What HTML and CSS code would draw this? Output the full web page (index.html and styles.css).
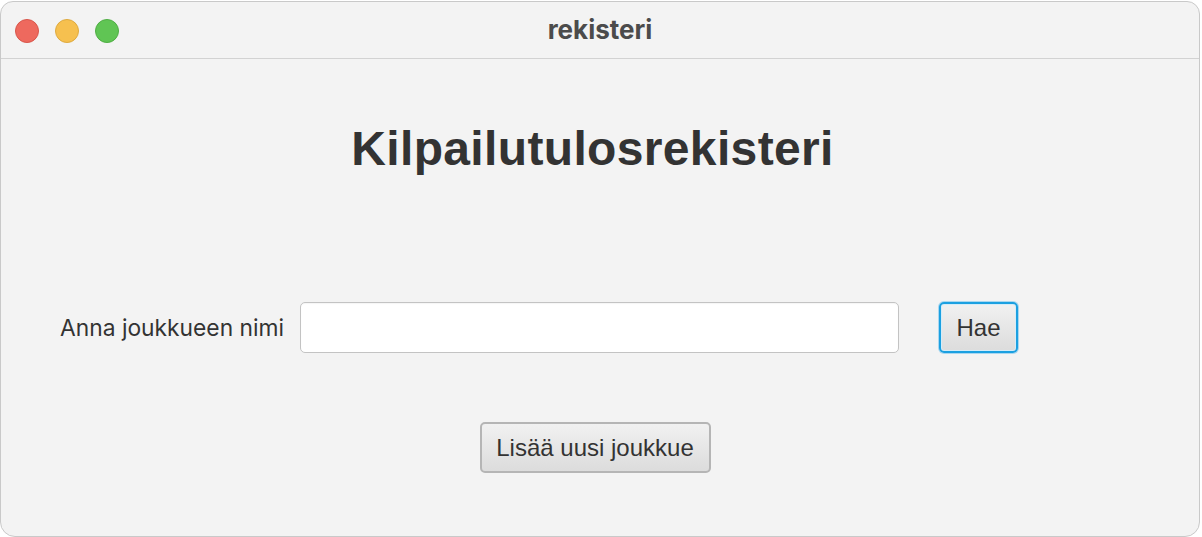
FILE: index.html
```html
<!DOCTYPE html>
<html>
<head>
<meta charset="utf-8">
<link rel="stylesheet" href="styles.css">
</head>
<body>
<div class="window">
  <div class="titlebar">
    <div class="lights">
      <span class="light red"></span>
      <span class="light yellow"></span>
      <span class="light green"></span>
    </div>
    <div class="title">rekisteri</div>
  </div>
  <div class="content">
    <h1 class="heading">Kilpailutulosrekisteri</h1>
    <div class="search-row">
      <label class="label">Anna joukkueen nimi</label>
      <div class="field"></div>
      <button class="btn btn-focus">Hae</button>
    </div>
    <div class="add-row">
      <button class="btn btn-add">Lisää uusi joukkue</button>
    </div>
  </div>
</div>
</body>
</html>
```

FILE: styles.css
```css
* { box-sizing: border-box; }
html, body { margin: 0; padding: 0; }
body {
  background: #ffffff;
  width: 1202px;
  height: 537px;
  overflow: hidden;
  font-family: "Liberation Sans", Arial, sans-serif;
}
.window {
  width: 1200px;
  height: 536px;
  margin-top: 1px;
  background: #f3f3f3;
  border: 1px solid #c9c9c9;
  border-radius: 13px 13px 15px 15px;
  overflow: hidden;
  display: flex;
  flex-direction: column;
}
.titlebar {
  height: 57px;
  flex: 0 0 57px;
  border-bottom: 1px solid #d2d2d2;
  position: relative;
  display: flex;
  align-items: center;
  justify-content: center;
}
.lights {
  position: absolute;
  left: 14px;
  top: 17px;
  display: flex;
  gap: 16px;
}
.light {
  width: 24px;
  height: 24px;
  border-radius: 50%;
  display: block;
}
.red { background: #ee695e; border: 1px solid #d8564b; }
.yellow { background: #f6c04f; border: 1px solid #deaa3f; }
.green { background: #60c554; border: 1px solid #4fae44; }
.title {
  font-family: Inter, "Noto Sans", sans-serif;
  font-weight: 700;
  font-size: 26px;
  color: #4b4b4b;
  margin-top: -1px;
  letter-spacing: 0;
}
.content {
  flex: 1;
  display: flex;
  flex-direction: column;
}
.heading {
  margin: 62px 0 0 0;
  padding-right: 15px;
  text-align: center;
  font-family: "Liberation Sans", Arial, sans-serif;
  font-weight: 700;
  font-size: 48px;
  line-height: 56px;
  color: #333333;
  letter-spacing: 0.35px;
}
.search-row {
  margin-top: 125px;
  display: flex;
  align-items: center;
  padding-left: 59px;
}
.label {
  font-family: Inter, "Noto Sans", sans-serif;
  font-size: 22.8px;
  color: #333333;
  letter-spacing: 0;
  width: 240px;
  white-space: nowrap;
}
.field {
  width: 599px;
  height: 51px;
  background: #ffffff;
  border: 1px solid #c3c3c3;
  border-radius: 5px;
  box-shadow: inset 0 1px 1px rgba(0,0,0,0.04);
}
.btn {
  font-family: "Liberation Sans", Arial, sans-serif;
  font-size: 24px;
  color: #333333;
  background: linear-gradient(#f1f1f1, #dcdcdc);
  border: 1px solid #b0b0b0;
  border-radius: 5px;
  padding: 0;
  height: 51px;
}
.btn-focus {
  margin-left: 40px;
  width: 79px;
  border: 2px solid #1ba0e1;
  box-shadow: 0 0 0 1px #a9d7f0, inset 0 0 0 1px #d4ecf8;
}
.add-row {
  margin-top: 69px;
  display: flex;
  justify-content: center;
  padding-right: 10px;
}
.btn-add {
  width: 231px;
  border: 2px solid #b5b5b5;
}
```
